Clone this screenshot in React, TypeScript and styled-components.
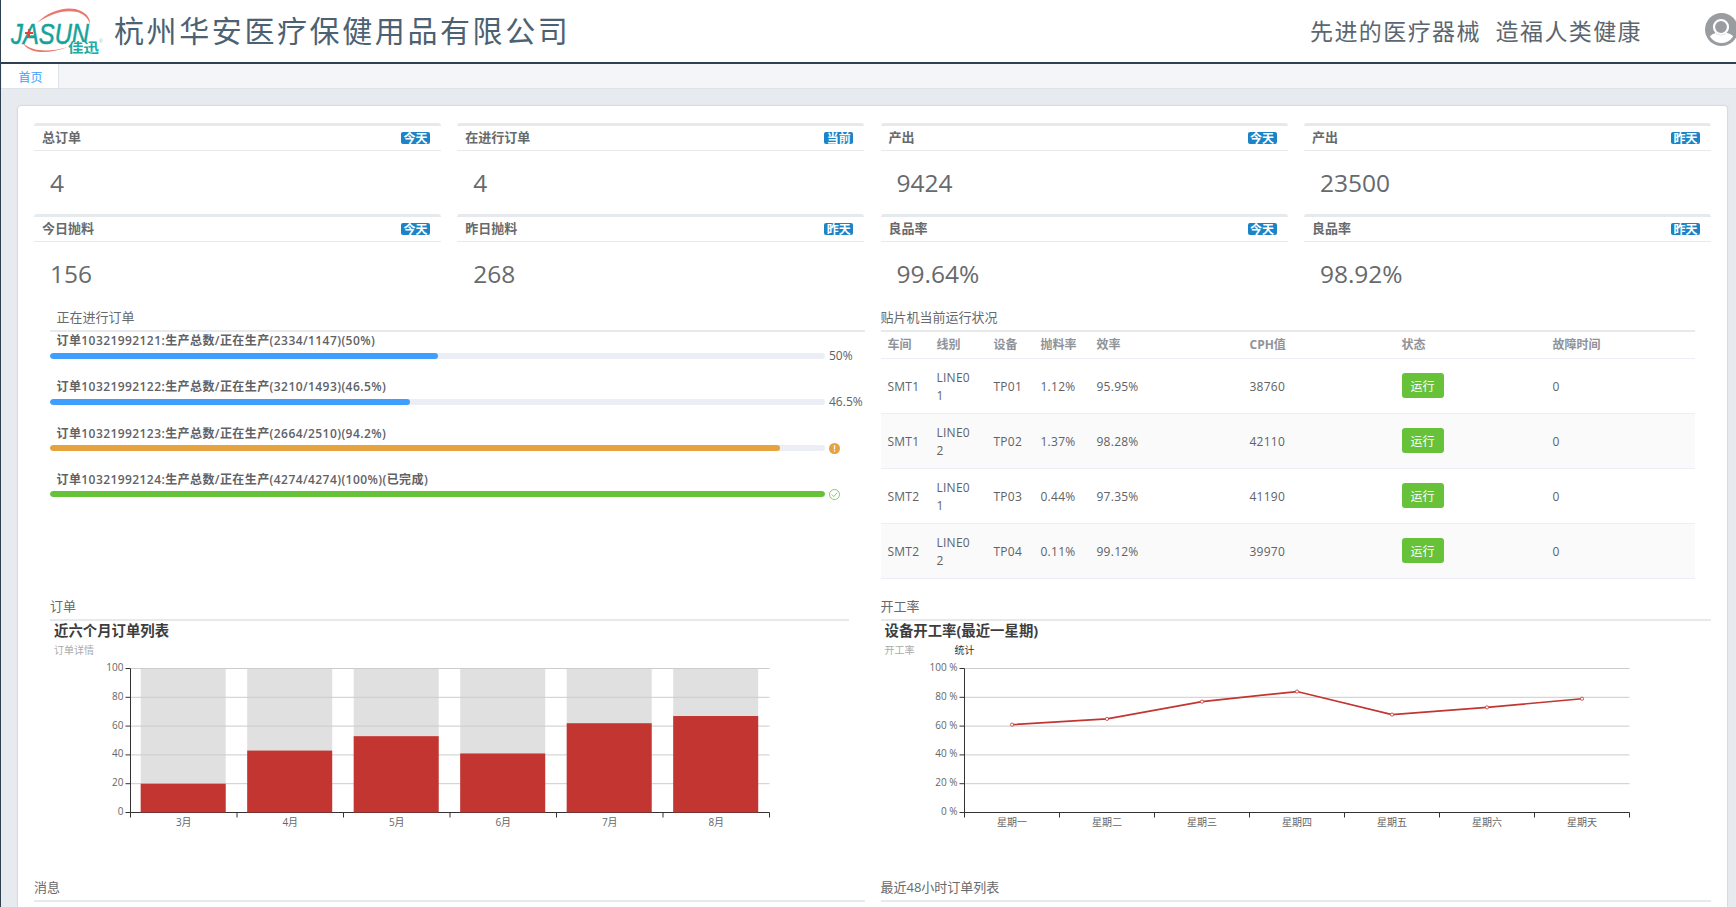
import React from "react";
import styled, { createGlobalStyle } from "styled-components";

const FONT = `"Open Sans", "Noto Sans CJK SC", sans-serif`;

const Global = createGlobalStyle`
  html, body { margin: 0; padding: 0; height: 907px; overflow: hidden; background: #fff; }
  #root { height: 907px; }
  * { box-sizing: border-box; }
`;

const Page = styled.div`
  width: 1736px;
  height: 907px;
  overflow: hidden;
  display: flex;
  flex-direction: column;
  border-left: 1px solid #2f4050;
  font-family: ${FONT};
  color: #676a6c;
  font-size: 12px;
`;

const Header = styled.header`
  height: 64px;
  flex: none;
  display: flex;
  align-items: center;
  background: #fff;
  border-bottom: 2px solid #2f4050;
  position: relative;
`;

const LogoBox = styled.div`
  width: 113px;
  height: 62px;
  flex: none;
`;

const CompanyName = styled.h1`
  margin: 0;
  font-size: 30px;
  font-weight: 400;
  letter-spacing: 2.6px;
  color: #4c6172;
  line-height: 62px;
  white-space: nowrap;
`;

const Slogan = styled.div`
  margin-left: auto;
  margin-right: 94px;
  font-size: 23px;
  letter-spacing: 1.4px;
  color: #5b6670;
  white-space: pre;
  line-height: 62px;
`;

const Avatar = styled.svg`
  position: absolute;
  right: -1px;
  top: 13px;
`;

const TabsBar = styled.nav`
  height: 25px;
  flex: none;
  background: #f3f5f9;
  border-bottom: 1px solid #dfe3e8;
  padding-left: 1px;
  display: flex;
`;

const Tab = styled.div`
  width: 57px;
  height: 24px;
  padding: 2px 0 0 1px;
  background: #fff;
  border-right: 1px solid #dfe3e8;
  color: #409eff;
  font-size: 12px;
  line-height: 24px;
  text-align: center;
`;

const Content = styled.main`
  flex: 1;
  background: #e7eaee;
  padding: 17px 9px 0 17px;
  min-height: 0;
`;

const Card = styled.div`
  height: 100%;
  background: #fff;
  border-radius: 3px 3px 0 0;
  box-shadow: 0 0 2px rgba(0, 0, 0, 0.25);
  padding: 17px 16px 0 16px;
  overflow: hidden;
`;

const StatGrid = styled.div`
  display: grid;
  grid-template-columns: repeat(4, 407px);
  column-gap: 16.3px;
`;

const Stat = styled.section`
  height: 91px;
  border-top: 3px solid #e7eaec;
  border-radius: 3px 3px 0 0;
`;

const StatHead = styled.div`
  height: 25px;
  display: flex;
  align-items: center;
  justify-content: space-between;
  padding: 0 11px 0 8px;
  border-bottom: 1px solid #e7eaec;
`;

const StatTitle = styled.span`
  font-size: 13px;
  font-weight: 700;
  color: #676a6c;
  position: relative;
  top: -1.5px;
`;

const Badge = styled.span`
  width: 29px;
  height: 12px;
  line-height: 13px;
  border-radius: 2px;
  background: #1c84c6;
  color: #fff;
  font-size: 12px;
  font-weight: 700;
  text-align: center;
`;

const StatValue = styled.div`
  height: 63px;
  line-height: 63px;
  padding-left: 16px;
  font-size: 24.5px;
  color: #676a6c;
`;

const TwoCols = styled.div<{ $h: number }>`
  display: grid;
  grid-template-columns: 830.5px 830.5px;
  column-gap: 16px;
  height: ${(p) => p.$h}px;
`;

const Column = styled.div<{ $pl?: number; $pr?: number }>`
  padding-left: ${(p) => p.$pl ?? 0}px;
  padding-right: ${(p) => p.$pr ?? 0}px;
  min-width: 0;
`;

const SectionTitle = styled.h3<{ $indent?: number; $width?: number }>`
  margin: 0;
  height: 27px;
  padding: 5px 0 0 ${(p) => p.$indent ?? 0}px;
  width: ${(p) => (p.$width ? `${p.$width}px` : "auto")};
  font-size: 13px;
  line-height: 15px;
  font-weight: 400;
  color: #676a6c;
  border-bottom: 2px solid #e7eaec;
`;

const ProgressItem = styled.div`
  height: 46.3px;
`;

const ProgressLabel = styled.div`
  height: 18px;
  line-height: 18px;
  padding-left: 6.5px;
  font-size: 12px;
  font-weight: 600;
  letter-spacing: 0.42px;
  color: #606266;
  white-space: nowrap;
`;

const ProgressLine = styled.div`
  display: flex;
  align-items: center;
  height: 11px;
`;

const Track = styled.div`
  width: 775px;
  height: 6px;
  flex: none;
  border-radius: 3px;
  background: #ebeef5;
  overflow: hidden;
`;

const Fill = styled.div<{ $color: string }>`
  height: 100%;
  border-radius: 3px;
  background: ${(p) => p.$color};
`;

const ProgressText = styled.span`
  margin-left: 4px;
  font-size: 12px;
  color: #606266;
  white-space: nowrap;
  position: relative;
  top: -0.5px;
`;

const StatusIcon = styled.svg`
  margin-left: 4px;
  flex: none;
  overflow: visible;
`;

const Table = styled.table`
  width: 814px;
  border-collapse: collapse;
  table-layout: fixed;
  font-size: 12px;
  letter-spacing: 0.25px;
  color: #606266;
`;

const HeadCell = styled.th`
  height: 26px;
  padding: 0 0 1px 7px;
  text-align: left;
  font-weight: 700;
  letter-spacing: 0;
  color: #909399;
  border-bottom: 1px solid #ebeef5;
`;

const Row = styled.tr<{ $striped: boolean }>`
  background: ${(p) => (p.$striped ? "#fafafa" : "#fff")};
`;

const Cell = styled.td`
  height: 55px;
  padding: 2px 0 0 7px;
  border-bottom: 1px solid #ebeef5;
  line-height: 18px;
`;

const WrapText = styled.div`
  width: 36px;
  word-break: break-all;
`;

const RunButton = styled.button`
  width: 42px;
  height: 25px;
  padding: 0;
  margin-bottom: 2px;
  border: none;
  border-radius: 3px;
  background: #67c23a;
  color: #fff;
  font-family: ${FONT};
  font-size: 12px;
  display: block;
`;

const ChartTitle = styled.div`
  height: 19px;
  line-height: 19px;
  padding-left: 4px;
  font-size: 14.4px;
  font-weight: 700;
  color: #3d3d3d;
`;

const LegendRow = styled.div`
  height: 20px;
  line-height: 20px;
  padding-left: 4px;
  display: flex;
  font-size: 10px;
  color: #aaa;
`;

const LegendExtra = styled.span`
  margin-left: 40px;
  color: #333;
`;

const ChartSvg = styled.svg`
  display: block;
  text {
    font-family: ${FONT};
    font-size: 10px;
    fill: #666;
  }
`;

type StatData = { t: string; b: string; v: string };
const stats: StatData[] = [
  { t: "总订单", b: "今天", v: "4" },
  { t: "在进行订单", b: "当前", v: "4" },
  { t: "产出", b: "今天", v: "9424" },
  { t: "产出", b: "昨天", v: "23500" },
  { t: "今日抛料", b: "今天", v: "156" },
  { t: "昨日抛料", b: "昨天", v: "268" },
  { t: "良品率", b: "今天", v: "99.64%" },
  { t: "良品率", b: "昨天", v: "98.92%" },
];

type ProgressData = { label: string; pct: number; color: string; kind: "text" | "warn" | "ok"; text?: string };
const progress: ProgressData[] = [
  { label: "订单10321992121:生产总数/正在生产(2334/1147)(50%)", pct: 50, color: "#409eff", kind: "text", text: "50%" },
  { label: "订单10321992122:生产总数/正在生产(3210/1493)(46.5%)", pct: 46.5, color: "#409eff", kind: "text", text: "46.5%" },
  { label: "订单10321992123:生产总数/正在生产(2664/2510)(94.2%)", pct: 94.2, color: "#e6a23c", kind: "warn" },
  { label: "订单10321992124:生产总数/正在生产(4274/4274)(100%)(已完成)", pct: 100, color: "#67c23a", kind: "ok" },
];

const colWidths = [49, 57, 47, 56, 153, 152, 151, 149];
const headers = ["车间", "线别", "设备", "抛料率", "效率", "CPH值", "状态", "故障时间"];
const rows = [
  ["SMT1", "LINE01", "TP01", "1.12%", "95.95%", "38760", "0"],
  ["SMT1", "LINE02", "TP02", "1.37%", "98.28%", "42110", "0"],
  ["SMT2", "LINE01", "TP03", "0.44%", "97.35%", "41190", "0"],
  ["SMT2", "LINE02", "TP04", "0.11%", "99.12%", "39970", "0"],
];

const PLOT_TOP = 8.5;
const PLOT_H = 144;
const yOf = (v: number) => PLOT_TOP + PLOT_H * (1 - v / 100);

function Axes({ x0, w, ticks, labels, suffix }: { x0: number; w: number; ticks: number; labels: string[]; suffix: string }) {
  const step = w / ticks;
  return (
    <g>
      {[0, 20, 40, 60, 80, 100].map((v) => (
        <g key={v}>
          {v > 0 && <line x1={x0} x2={x0 + w} y1={yOf(v)} y2={yOf(v)} stroke="#ccc" />}
          <line x1={x0 - 5} x2={x0} y1={yOf(v)} y2={yOf(v)} stroke="#333" />
          <text x={x0 - 7} y={yOf(v) + 2.5} textAnchor="end">{`${v}${suffix}`}</text>
        </g>
      ))}
      <line x1={x0} x2={x0} y1={PLOT_TOP} y2={yOf(0)} stroke="#333" />
      <line x1={x0} x2={x0 + w} y1={yOf(0)} y2={yOf(0)} stroke="#333" />
      {Array.from({ length: ticks + 1 }, (_, i) => (
        <line key={i} x1={x0 + i * step} x2={x0 + i * step} y1={yOf(0)} y2={yOf(0) + 5} stroke="#333" />
      ))}
      {labels.map((l, i) => (
        <text key={l} x={x0 + (i + 0.5) * step} y={yOf(0) + 13} textAnchor="middle">{l}</text>
      ))}
    </g>
  );
}

function BarChart() {
  const x0 = 80.5;
  const w = 639;
  const step = w / 6;
  const vals = [20, 43, 53, 41, 62, 67];
  return (
    <ChartSvg width={799} height={190}>
      {vals.map((v, i) => {
        const x = x0 + i * step + 10.2;
        return <rect key={i} x={x} y={PLOT_TOP} width={85} height={PLOT_H} fill="#e0e0e0" />;
      })}
      <Axes x0={x0} w={w} ticks={6} labels={["3月", "4月", "5月", "6月", "7月", "8月"]} suffix="" />
      {vals.map((v, i) => {
        const x = x0 + i * step + 10.2;
        return <rect key={i} x={x} y={yOf(v)} width={85} height={yOf(0) - yOf(v)} fill="#c23531" />;
      })}
    </ChartSvg>
  );
}

function LineChart() {
  const x0 = 83.5;
  const w = 665;
  const step = w / 7;
  const vals = [61, 65, 77, 84, 68, 73, 79];
  const pts = vals.map((v, i) => [x0 + (i + 0.5) * step, yOf(v)] as const);
  return (
    <ChartSvg width={830} height={190}>
      <Axes x0={x0} w={w} ticks={7} labels={["星期一", "星期二", "星期三", "星期四", "星期五", "星期六", "星期天"]} suffix=" %" />
      <polyline points={pts.map((p) => p.join(",")).join(" ")} fill="none" stroke="#c23531" strokeWidth={1.7} />
      {pts.map((p, i) => (
        <circle key={i} cx={p[0]} cy={p[1]} r={1.6} fill="#fff" stroke="#c23531" strokeWidth={0.8} />
      ))}
    </ChartSvg>
  );
}

function Logo() {
  return (
    <svg width="113" height="62" viewBox="0 0 113 62">
      <path d="M36 23 C48 10 68 5 80 11 C86 14 89 18 89 24 C87 18 83 14 76 12 C64 9 48 14 36 23Z" fill="#e8796c" />
      <path d="M22 43 C26 52 44 56 67 47 C46 53 30 51 22 43Z" fill="#e8796c" />
      <text x="10" y="44" fontFamily="Liberation Sans, sans-serif" fontStyle="italic" fontSize="29" fill="#14a39b" stroke="#14a39b" strokeWidth="0.5" textLength="78" lengthAdjust="spacingAndGlyphs">JASUN</text>
      <rect x="24" y="32" width="8" height="2" fill="#e2453c" />
      <rect x="27" y="29" width="2" height="8" fill="#e2453c" />
      <rect x="66" y="42" width="33" height="11" fill="#fff" />
      <text x="67" y="52" fontFamily="Noto Sans CJK SC, sans-serif" fontWeight="700" fontSize="13" fill="#20aaa4" textLength="31" lengthAdjust="spacingAndGlyphs">佳迅</text>
      <text x="98" y="43" fontFamily="Liberation Sans, sans-serif" fontSize="5" fill="#8fc9c5">®</text>
    </svg>
  );
}

function UserIcon() {
  return (
    <Avatar width="32" height="33" viewBox="0 0 32 33">
      <defs>
        <clipPath id="avatar-inner">
          <circle cx="16.5" cy="16.5" r="13.5" />
        </clipPath>
      </defs>
      <circle cx="16.5" cy="16.5" r="16.5" fill="#9a9d9f" />
      <circle cx="16" cy="14" r="7" fill="#9a9d9f" stroke="#fff" strokeWidth="2.2" />
      <path d="M3 33 L3 26 C5 22 9 20 11 20 C13 23 19 23 21 20 C24 20 28 22 30 26 L30 33Z" fill="#fff" clipPath="url(#avatar-inner)" />
    </Avatar>
  );
}

export default function App() {
  return (
    <Page>
      <Global />
      <Header>
        <LogoBox>
          <Logo />
        </LogoBox>
        <CompanyName>杭州华安医疗保健用品有限公司</CompanyName>
        <Slogan>先进的医疗器械  造福人类健康</Slogan>
        <UserIcon />
      </Header>
      <TabsBar>
        <Tab>首页</Tab>
      </TabsBar>
      <Content>
        <Card>
          <StatGrid>
            {stats.map((s, i) => (
              <Stat key={i}>
                <StatHead>
                  <StatTitle>{s.t}</StatTitle>
                  <Badge>{s.b}</Badge>
                </StatHead>
                <StatValue>{s.v}</StatValue>
              </Stat>
            ))}
          </StatGrid>
          <TwoCols $h={289}>
            <Column $pl={16}>
              <SectionTitle $indent={6.5}>正在进行订单</SectionTitle>
              {progress.map((p) => (
                <ProgressItem key={p.label}>
                  <ProgressLabel>{p.label}</ProgressLabel>
                  <ProgressLine>
                    <Track>
                      <Fill $color={p.color} style={{ width: `${p.pct}%` }} />
                    </Track>
                    {p.kind === "text" && <ProgressText>{p.text}</ProgressText>}
                    {p.kind === "warn" && (
                      <StatusIcon width="11" height="11" viewBox="0 0 11 11">
                        <circle cx="5.5" cy="5.5" r="5.5" fill="#e6a23c" />
                        <rect x="4.8" y="2.3" width="1.4" height="4" fill="#fff" />
                        <rect x="4.8" y="7.2" width="1.4" height="1.4" fill="#fff" />
                      </StatusIcon>
                    )}
                    {p.kind === "ok" && (
                      <StatusIcon width="11" height="11" viewBox="0 0 11 11">
                        <circle cx="5.5" cy="5.5" r="5" fill="none" stroke="#67c23a" strokeWidth="0.8" />
                        <path d="M2.8 5.6 L4.8 7.6 L8.2 3.6" fill="none" stroke="#67c23a" strokeWidth="0.8" />
                      </StatusIcon>
                    )}
                  </ProgressLine>
                </ProgressItem>
              ))}
            </Column>
            <Column>
              <SectionTitle $width={814}>贴片机当前运行状况</SectionTitle>
              <Table>
                <colgroup>
                  {colWidths.map((w, i) => (
                    <col key={i} width={w} />
                  ))}
                </colgroup>
                <thead>
                  <tr>
                    {headers.map((h) => (
                      <HeadCell key={h}>{h}</HeadCell>
                    ))}
                  </tr>
                </thead>
                <tbody>
                  {rows.map((r, i) => (
                    <Row key={i} $striped={i % 2 === 1}>
                      <Cell>{r[0]}</Cell>
                      <Cell>
                        <WrapText>{r[1]}</WrapText>
                      </Cell>
                      <Cell>{r[2]}</Cell>
                      <Cell>{r[3]}</Cell>
                      <Cell>{r[4]}</Cell>
                      <Cell>{r[5]}</Cell>
                      <Cell>
                        <RunButton>运行</RunButton>
                      </Cell>
                      <Cell>{r[6]}</Cell>
                    </Row>
                  ))}
                </tbody>
              </Table>
            </Column>
          </TwoCols>
          <TwoCols $h={281}>
            <Column $pl={16} $pr={16}>
              <SectionTitle>订单</SectionTitle>
              <ChartTitle>近六个月订单列表</ChartTitle>
              <LegendRow>订单详情</LegendRow>
              <BarChart />
            </Column>
            <Column>
              <SectionTitle>开工率</SectionTitle>
              <ChartTitle>设备开工率(最近一星期)</ChartTitle>
              <LegendRow>
                开工率<LegendExtra>统计</LegendExtra>
              </LegendRow>
              <LineChart />
            </Column>
          </TwoCols>
          <TwoCols $h={40}>
            <Column>
              <SectionTitle>消息</SectionTitle>
            </Column>
            <Column>
              <SectionTitle>最近48小时订单列表</SectionTitle>
            </Column>
          </TwoCols>
        </Card>
      </Content>
    </Page>
  );
}
